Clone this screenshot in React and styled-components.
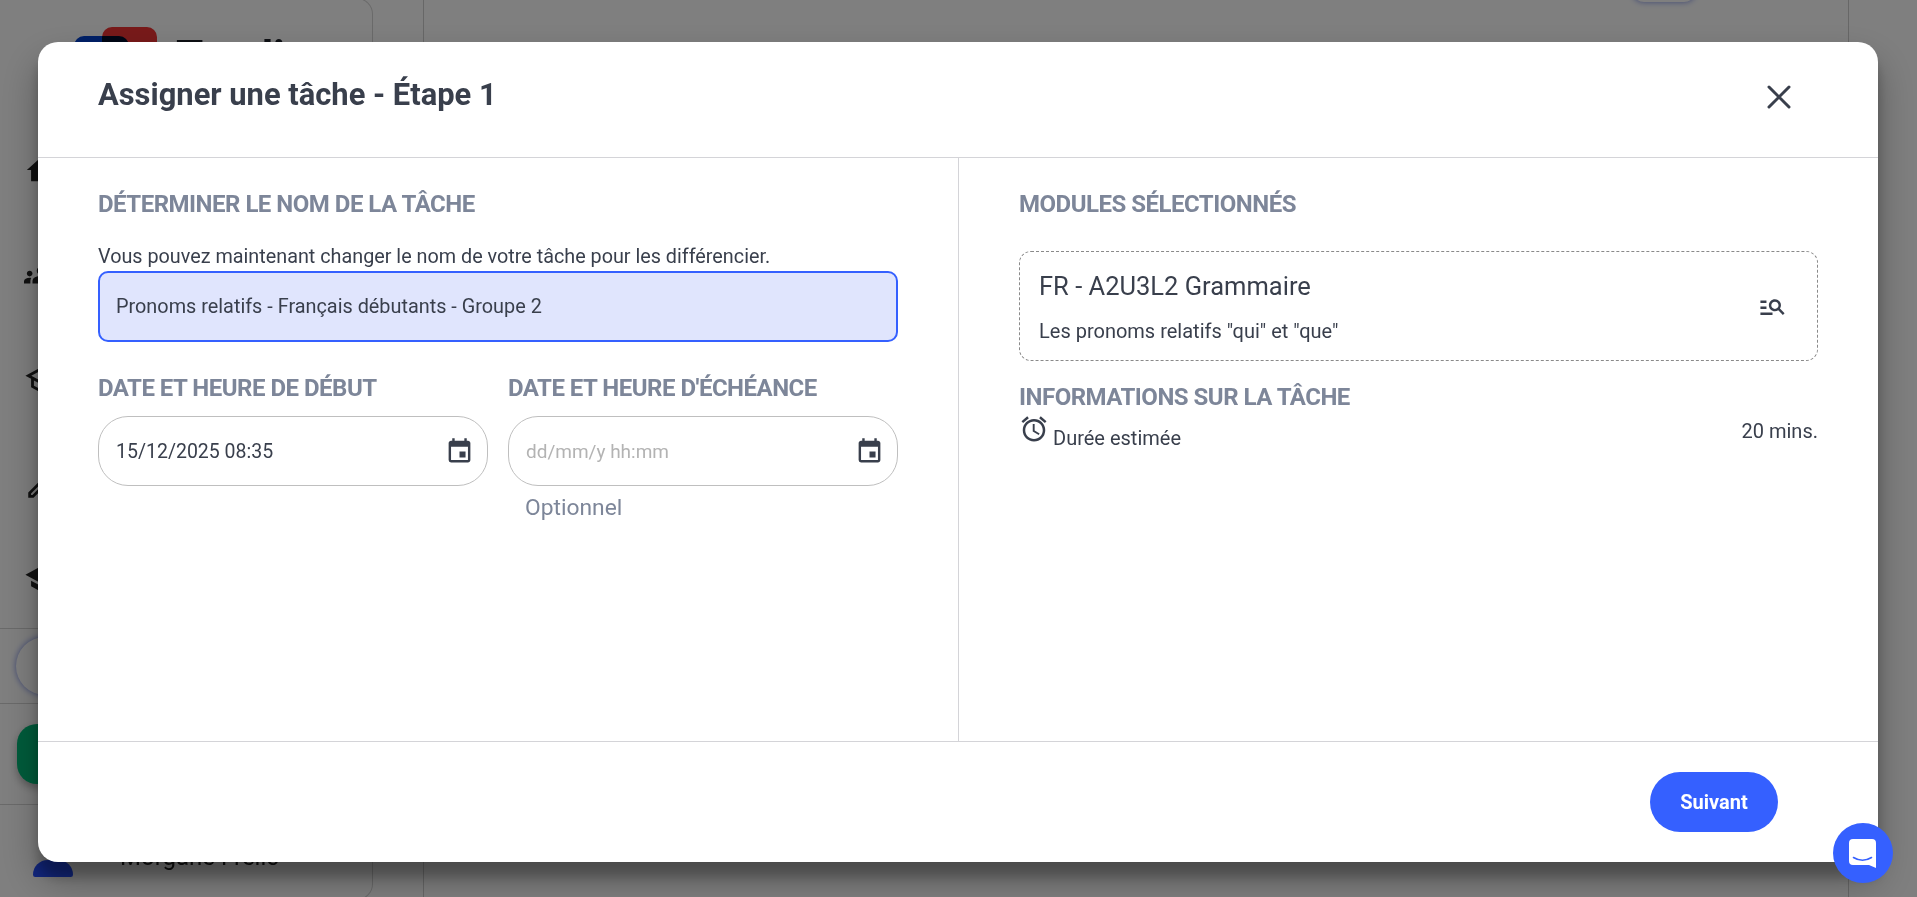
import styled, { createGlobalStyle } from "styled-components";
import { MdEvent, MdAlarm, MdManageSearch, MdHome, MdGroups, MdOutlineSchool, MdOutlineEdit, MdSchool, MdKeyboardArrowDown } from "react-icons/md";

const GlobalStyle = createGlobalStyle`
	html, body {
		margin: 0;
		height: 100%;
		overflow: hidden;
		background: #fff;
		font-family: Roboto, "Liberation Sans", sans-serif;
	}
	* {
		box-sizing: border-box;
	}
`;
const Page = styled.div`
	display: flex;
	height: 897px;
	overflow: hidden;
	color: #1d2129;
`;
const Sidebar = styled.aside`
	display: flex;
	flex-direction: column;
	flex: none;
	width: 373px;
	height: 902px;
	margin-top: -2px;
	border: 1px solid #d5d5d5;
	border-left: none;
	border-radius: 0 16px 16px 0;
`;
const Brand = styled.div`
	display: flex;
	align-items: flex-start;
	gap: 19px;
	height: 140px;
	padding: 28px 0 0 74px;
`;
const LogoMark = styled.div`
	position: relative;
	width: 83px;
	height: 70px;
	&::before,
	&::after {
		content: "";
		position: absolute;
		width: 55px;
		height: 60px;
		border-radius: 10px;
	}
	&::before {
		left: 28px;
		top: 0;
		background: #f03434;
	}
	&::after {
		left: 0;
		top: 9px;
		background: #0040d0;
		mix-blend-mode: multiply;
	}
`;
const BrandName = styled.div`
	font-size: 44px;
	font-weight: 700;
	line-height: 60px;
`;
const NavList = styled.nav`
	display: flex;
	flex-direction: column;
	gap: 71px;
	height: 489px;
	padding: 14px 0 0 24px;
	font-size: 34px;
	color: #222;
`;
const NavIcon = styled.div`
	display: flex;
	height: 34px;
	margin-top: ${(p) => p.$shift || 0}px;
`;
const Band = styled.div`
	display: flex;
	align-items: center;
	flex: none;
	height: ${(p) => p.$h}px;
	padding-left: ${(p) => p.$pad}px;
	border-top: 1px solid #d5d5d5;
`;
const RoundBox = styled.div`
	width: 280px;
	height: 58px;
	border-radius: 29px;
	background: #fff;
	box-shadow: 0 0 6px #7d8fe6;
`;
const GreenButton = styled.div`
	width: 320px;
	height: 60px;
	border-radius: 20px;
	background: #00b877;
	box-shadow: 0 4px 8px rgba(0, 0, 0, 0.3);
`;
const UserRow = styled.div`
	display: flex;
	align-items: flex-start;
	gap: 47px;
	height: 90px;
	padding: 38px 0 0 33px;
	border-top: 1px solid #d5d5d5;
	color: #222;
`;
const Avatar = styled.div`
	flex: none;
	width: 40px;
	height: 17px;
	margin-top: 17px;
	border-radius: 20px 20px 3px 3px;
	background: #244efe;
`;
const UserName = styled.div`
	font-size: 24px;
	line-height: 28px;
`;
const Main = styled.main`
	position: relative;
	flex: none;
	width: 1426px;
	margin-left: 50px;
	border-left: 1px solid #cfcfcf;
	border-right: 1px solid #cfcfcf;
`;
const TopButton = styled.div`
	position: absolute;
	top: -30px;
	right: 152px;
	width: 64px;
	height: 32px;
	border-radius: 12px;
	background: #fff;
	box-shadow: 0 0 6px #7d8fe6;
`;
const Overlay = styled.div`
	position: fixed;
	inset: 0;
	display: flex;
	align-items: flex-start;
	padding: 42px 0 0 38px;
	background: rgba(0, 0, 0, 0.5);
`;
const Modal = styled.section`
	display: flex;
	flex-direction: column;
	width: 1840px;
	height: 820px;
	border-radius: 20px 20px 0 20px;
	background: #fff;
	box-shadow: 0 19px 38px rgba(0, 0, 0, 0.3), 0 15px 12px rgba(0, 0, 0, 0.22);
	color: #393f4c;
`;
const ModalHeader = styled.header`
	display: flex;
	align-items: flex-start;
	justify-content: space-between;
	flex: none;
	height: 116px;
	padding: 36px 87px 0 60px;
	border-bottom: 1px solid #d4d4d8;
`;
const Title = styled.h2`
	margin: 0;
	font-size: 30.9px;
	font-weight: 700;
	line-height: 34px;
`;
const CloseButton = styled.button`
	display: flex;
	margin: 7px 0 0;
	padding: 0;
	border: none;
	background: none;
	color: #393f4c;
`;
const ModalBody = styled.div`
	display: grid;
	grid-template-columns: 920px 1fr;
	flex: 1;
	min-height: 0;
`;
const Pane = styled.div`
	padding: 33px 60px 0;
	& + & {
		border-left: 1px solid #d4d4d8;
	}
`;
const SectionTitle = styled.h3`
	margin: ${(p) => p.$top || 0}px 0 0;
	font-size: 24px;
	font-weight: 700;
	line-height: 26px;
	letter-spacing: -0.5px;
	color: #7d8699;
`;
const HelpText = styled.p`
	margin: 29px 0 0;
	font-size: 19.8px;
	line-height: 22px;
`;
const NameInput = styled.input`
	display: block;
	width: 800px;
	height: 71px;
	margin-top: 3px;
	padding: 0 16px;
	border: 2px solid #3560ff;
	border-radius: 10px;
	outline: none;
	background: #e0e5fd;
	color: #393f4c;
	font: 400 19.85px Roboto, sans-serif;
`;
const DateRow = styled.div`
	display: grid;
	grid-template-columns: 390px 390px;
	gap: 20px;
	margin-top: 33px;
`;
const DateLabel = styled(SectionTitle)`
	margin-bottom: 15px;
`;
const DateField = styled.div`
	display: flex;
	align-items: center;
	justify-content: space-between;
	height: 70px;
	padding: 0 13px 0 17px;
	border: 1px solid #bfbfbf;
	border-radius: 30px;
	font-size: 19.5px;
`;
const Placeholder = styled.span`
	color: #b3b3b3;
	font-size: 19px;
`;
const HintText = styled.div`
	margin: 9px 0 0 17px;
	font-size: 22.8px;
	line-height: 26px;
	color: #7d8699;
`;
const ModuleCard = styled.div`
	display: flex;
	align-items: center;
	justify-content: space-between;
	height: 110px;
	margin-top: 34px;
	padding: 0 30px 0 19px;
	border: 1px dashed #8a8a8a;
	border-radius: 12px;
`;
const ModuleName = styled.div`
	font-size: 25.5px;
	line-height: 30px;
`;
const ModuleDesc = styled.div`
	margin-top: 19px;
	font-size: 20px;
	line-height: 22px;
`;
const InfoRow = styled.div`
	display: flex;
	align-items: flex-start;
	justify-content: space-between;
	font-size: 20px;
`;
const InfoLabel = styled.div`
	display: flex;
	align-items: flex-end;
	gap: 4px;
	margin-top: 4px;
	line-height: 22px;
`;
const LabelText = styled.span`
	margin-bottom: -5px;
`;
const InfoValue = styled.div`
	margin-top: 10px;
	line-height: 22px;
`;
const ModalFooter = styled.footer`
	display: flex;
	align-items: flex-start;
	justify-content: flex-end;
	flex: none;
	height: 121px;
	padding: 30px 100px 0 0;
	border-top: 1px solid #d4d4d8;
`;
const NextButton = styled.button`
	width: 128px;
	height: 60px;
	border: none;
	border-radius: 30px;
	background: #3560ff;
	color: #fff;
	font: 700 20px Roboto, sans-serif;
`;
const ChatBubble = styled.div`
	position: fixed;
	left: 1833px;
	top: 823px;
	display: flex;
	align-items: center;
	justify-content: center;
	width: 60px;
	height: 60px;
	border-radius: 50%;
	background: #3560ff;
`;

function CloseIcon() {
	return (
		<svg width="24" height="24" viewBox="0 0 24 24" fill="none" stroke="currentColor" strokeWidth="3" strokeLinecap="round">
			<path d="M2 2 L22 22 M22 2 L2 22" />
		</svg>
	);
}

function ChatIcon() {
	return (
		<svg width="28" height="30" viewBox="0 0 28 30">
			<path d="M4 1 H23 a4 4 0 0 1 4 4 V30 L20 27 H4 a4 4 0 0 1 -4 -4 V5 a4 4 0 0 1 4 -4 Z" fill="#fff" />
			<path d="M4.5 19.5 Q13.5 25 22.5 19.5" fill="none" stroke="#3560ff" strokeWidth="1.6" strokeLinecap="round" />
		</svg>
	);
}

function App() {
	return (
		<>
			<GlobalStyle />
			<Page>
				<Sidebar>
					<Brand>
						<LogoMark />
						<BrandName>Tandi</BrandName>
					</Brand>
					<NavList>
						<NavIcon><MdHome /></NavIcon>
						<NavIcon><MdGroups /></NavIcon>
						<NavIcon><MdOutlineSchool /></NavIcon>
						<NavIcon><MdOutlineEdit /></NavIcon>
						<NavIcon $shift={-11}><MdSchool /></NavIcon>
					</NavList>
					<Band $h={75} $pad={16}><RoundBox /></Band>
					<Band $h={101} $pad={17}><GreenButton /></Band>
					<UserRow>
						<Avatar />
						<UserName>Morgane Frelic</UserName>
						<MdKeyboardArrowDown size={24} />
					</UserRow>
				</Sidebar>
				<Main>
					<TopButton />
				</Main>
			</Page>
			<Overlay>
				<Modal>
					<ModalHeader>
						<Title>Assigner une tâche - Étape 1</Title>
						<CloseButton aria-label="Fermer"><CloseIcon /></CloseButton>
					</ModalHeader>
					<ModalBody>
						<Pane>
							<SectionTitle>DÉTERMINER LE NOM DE LA TÂCHE</SectionTitle>
							<HelpText>Vous pouvez maintenant changer le nom de votre tâche pour les différencier.</HelpText>
							<NameInput readOnly value="Pronoms relatifs - Français débutants - Groupe 2" />
							<DateRow>
								<div>
									<DateLabel>DATE ET HEURE DE DÉBUT</DateLabel>
									<DateField>
										<span>15/12/2025 08:35</span>
										<MdEvent size={29} />
									</DateField>
								</div>
								<div>
									<DateLabel>DATE ET HEURE D'ÉCHÉANCE</DateLabel>
									<DateField>
										<Placeholder>dd/mm/y hh:mm</Placeholder>
										<MdEvent size={29} />
									</DateField>
									<HintText>Optionnel</HintText>
								</div>
							</DateRow>
						</Pane>
						<Pane>
							<SectionTitle>MODULES SÉLECTIONNÉS</SectionTitle>
							<ModuleCard>
								<div>
									<ModuleName>FR - A2U3L2 Grammaire</ModuleName>
									<ModuleDesc>Les pronoms relatifs "qui" et "que"</ModuleDesc>
								</div>
								<MdManageSearch size={29} />
							</ModuleCard>
							<SectionTitle $top={23}>INFORMATIONS SUR LA TÂCHE</SectionTitle>
							<InfoRow>
								<InfoLabel>
									<MdAlarm size={30} />
									<LabelText>Durée estimée</LabelText>
								</InfoLabel>
								<InfoValue>20 mins.</InfoValue>
							</InfoRow>
						</Pane>
					</ModalBody>
					<ModalFooter>
						<NextButton>Suivant</NextButton>
					</ModalFooter>
				</Modal>
			</Overlay>
			<ChatBubble><ChatIcon /></ChatBubble>
		</>
	);
}

export default App;
